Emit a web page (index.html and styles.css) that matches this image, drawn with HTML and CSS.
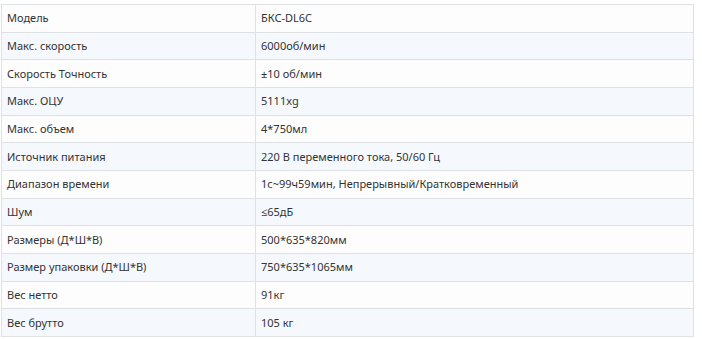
FILE: index.html
```html
<!DOCTYPE html>
<html lang="ru">
<head>
<meta charset="utf-8">
<link rel="stylesheet" href="styles.css">
</head>
<body>
<table class="specs">
<tbody>
<tr><td class="k">Модель</td><td>БКС-DL6C</td></tr>
<tr><td class="k">Макс. скорость</td><td>6000об/мин</td></tr>
<tr><td class="k">Скорость Точность</td><td>±10 об/мин</td></tr>
<tr><td class="k">Макс. ОЦУ</td><td>5111xg</td></tr>
<tr><td class="k">Макс. объем</td><td>4*750мл</td></tr>
<tr><td class="k">Источник питания</td><td>220 В переменного тока, 50/60 Гц</td></tr>
<tr><td class="k">Диапазон времени</td><td>1с~99ч59мин, Непрерывный/Кратковременный</td></tr>
<tr><td class="k">Шум</td><td>≤65дБ</td></tr>
<tr><td class="k">Размеры (Д*Ш*В)</td><td>500*635*820мм</td></tr>
<tr><td class="k">Размер упаковки (Д*Ш*В)</td><td>750*635*1065мм</td></tr>
<tr><td class="k">Вес нетто</td><td>91кг</td></tr>
<tr><td class="k">Вес брутто</td><td>105 кг</td></tr>
</tbody>
</table>
</body>
</html>
```
FILE: styles.css
```css
html, body {
  margin: 0;
  padding: 0;
  background: #ffffff;
}
body {
  padding: 4px 0 0 1px;
  font-family: "Noto Sans", "Open Sans", sans-serif;
  font-size: 11px;
  color: #333333;
}
.specs {
  border-collapse: collapse;
  width: 693px;
  table-layout: fixed;
}
.specs tr {
  height: 27.67px;
}
.specs td {
  border: 1px solid #dfe2e5;
  padding: 0 5px;
  box-sizing: border-box;
  vertical-align: middle;
  line-height: 16px;
  white-space: nowrap;
}
.specs td.k {
  width: 254px;
}
.specs tr:nth-child(odd) td {
  background: #fdfdfe;
}
.specs tr:nth-child(even) td {
  background: #f5f9fe;
}
```
